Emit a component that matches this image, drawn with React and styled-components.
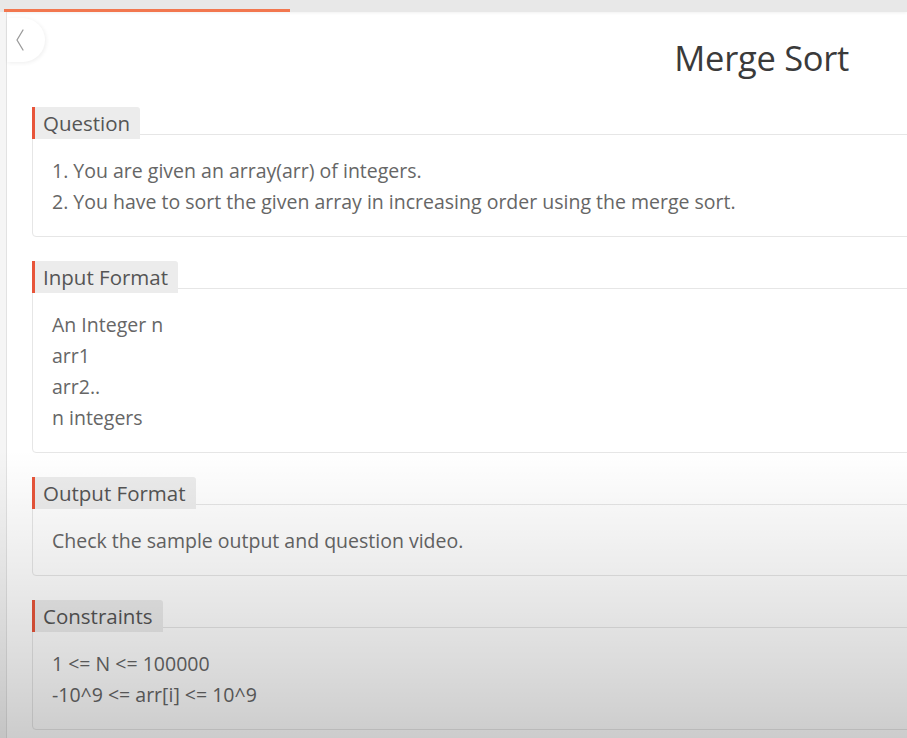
import React from "react";
import styled, { createGlobalStyle } from "styled-components";

const GlobalStyle = createGlobalStyle`
  html, body { margin: 0; padding: 0; background: #ffffff; overflow: hidden; }
  body { font-family: "Open Sans", "Noto Sans", sans-serif; }
  * { box-sizing: border-box; }
`;

const Page = styled.div`
  position: relative;
  width: 907px;
  height: 738px;
  overflow: hidden;
  display: flex;
  flex-direction: column;
  background: #ffffff;
`;

const TabBar = styled.div`
  height: 12px;
  flex: none;
  background: #e8e8e8;
  display: flex;
  align-items: flex-end;
  padding-left: 4px;
  box-shadow: 0 1px 3px rgba(0, 0, 0, 0.06);
  position: relative;
  z-index: 2;
`;

const TabIndicator = styled.div`
  width: 286px;
  height: 3px;
  background: #f2774f;
`;

const Body = styled.div`
  flex: 1;
  display: flex;
  min-height: 0;
`;

const LeftRail = styled.div`
  width: 7px;
  flex: none;
  background: #f5f5f5;
  border-right: 1px solid #e2e2e2;
  position: relative;
  z-index: 2;
`;

const Main = styled.div`
  flex: 1;
  margin-right: -80px;
  padding-left: 25px;
  display: flex;
  flex-direction: column;
`;

const BackButton = styled.div`
  position: absolute;
  top: 18px;
  left: 7px;
  width: 38px;
  height: 44px;
  border-radius: 0 22px 22px 0;
  background: #ffffff;
  box-shadow: 1px 1px 4px rgba(0, 0, 0, 0.07);
  display: flex;
  align-items: center;
  padding-left: 9px;
  z-index: 3;
`;

const Header = styled.div`
  margin-top: 24px;
  height: 44px;
  display: flex;
  justify-content: flex-end;
  padding-right: 138px;
`;

const Title = styled.h1`
  margin: 0;
  font-size: 34.5px;
  line-height: 44px;
  font-weight: 400;
  color: #3a3a3a;
  letter-spacing: -0.3px;
`;

const Sections = styled.div`
  margin-top: 27px;
  display: flex;
  flex-direction: column;
  gap: 24px;
`;

const Section = styled.section`
  display: flex;
  flex-direction: column;
  align-items: flex-start;
`;

const Tag = styled.div`
  position: relative;
  z-index: 1;
  height: 32px;
  line-height: 32px;
  padding: 0 10px 0 8px;
  border-left: 3px solid #e8553a;
  background: #ececec;
  font-size: 20.5px;
  color: #555555;
  border-radius: 0 3px 0 0;
`;

const Card = styled.div`
  align-self: stretch;
  margin-top: -5px;
  border: 1px solid #e6e6e6;
  border-radius: 4px;
  padding: 20px 19px 19px 19px;
  background: #ffffff;
`;

const Line = styled.div`
  font-size: 19.5px;
  line-height: 31px;
  color: #666666;
  white-space: nowrap;
`;

const Shade = styled.div`
  position: absolute;
  left: 0;
  right: 0;
  top: 450px;
  bottom: 0;
  pointer-events: none;
  background: linear-gradient(
    to bottom,
    rgba(0, 0, 0, 0) 0%,
    rgba(0, 0, 0, 0.07) 40%,
    rgba(0, 0, 0, 0.14) 75%,
    rgba(0, 0, 0, 0.2) 100%
  );
  z-index: 5;
`;

const sections = [
  {
    title: "Question",
    lines: [
      "1. You are given an array(arr) of integers.",
      "2. You have to sort the given array in increasing order using the merge sort.",
    ],
  },
  {
    title: "Input Format",
    lines: ["An Integer n", "arr1", "arr2..", "n integers"],
  },
  {
    title: "Output Format",
    lines: ["Check the sample output and question video."],
  },
  {
    title: "Constraints",
    lines: ["1 <= N <= 100000", "-10^9 <= arr[i] <= 10^9"],
  },
];

export default function App() {
  return (
    <>
      <GlobalStyle />
      <Page>
        <TabBar>
          <TabIndicator />
        </TabBar>
        <Body>
          <LeftRail />
          <Main>
            <Header>
              <Title>Merge Sort</Title>
            </Header>
            <Sections>
              {sections.map((s) => (
                <Section key={s.title}>
                  <Tag>{s.title}</Tag>
                  <Card>
                    {s.lines.map((l) => (
                      <Line key={l}>{l}</Line>
                    ))}
                  </Card>
                </Section>
              ))}
            </Sections>
          </Main>
        </Body>
        <BackButton>
          <svg width="8" height="22" viewBox="0 0 8 22" fill="none">
            <path d="M7 1 L1 11 L7 21" stroke="#9a9a9a" strokeWidth="1.3" strokeLinecap="round" strokeLinejoin="round" />
          </svg>
        </BackButton>
        <Shade />
      </Page>
    </>
  );
}
